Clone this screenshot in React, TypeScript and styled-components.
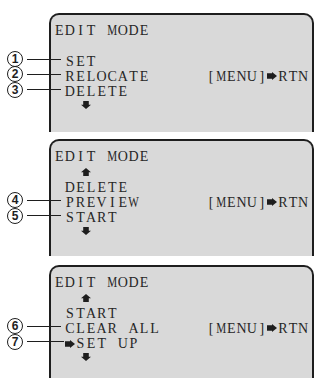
import React from 'react';
import styled, { createGlobalStyle } from 'styled-components';

const CELL = 10.6;
const INK = '#1e1e1e';
const WIDE = 'MW';

const GlobalStyle = createGlobalStyle`
    body {
        margin: 0;
        background: #ffffff;
    }
`;

const Page = styled.main`
    display: flex;
    flex-direction: column;
    box-sizing: border-box;
    width: 320px;
    padding: 13px 0 0 49px;
`;

const Screen = styled.section<{ $height: number; $gap: number }>`
    box-sizing: border-box;
    width: 265px;
    height: ${(p) => p.$height}px;
    margin-bottom: ${(p) => p.$gap}px;
    padding: 8px 3px 0 3px;
    background: #d9d9d9;
    border: 2px solid ${INK};
    border-bottom: none;
    border-radius: 10px 10px 0 0;
    font-family: 'Liberation Serif', 'Times New Roman', serif;
    font-size: 14px;
    color: #262626;
`;

const Line = styled.div<{ $indent?: number }>`
    position: relative;
    display: flex;
    align-items: flex-start;
    height: 15.3px;
    line-height: 15.3px;
    padding-left: ${(p) => p.$indent ?? 0}px;
    white-space: pre;
`;

// the OSD font is a fixed grid: every character sits in its own cell
const Cell = styled.span<{ $width: number }>`
    display: inline-flex;
    justify-content: center;
    width: ${(p) => p.$width}px;
`;

// M and W are wider than a cell, so they are squeezed to fit
const Glyph = styled.span<{ $wide: boolean }>`
    display: inline-block;
    transform: ${(p) => (p.$wide ? 'scaleX(0.8)' : 'none')};
    ${(p) => p.$wide && 'margin: 0 -1.3px;'}
`;

const Menu = styled.span`
    display: flex;
    align-items: flex-start;
    margin-left: auto;
    margin-right: 1px;
`;

const Marker = styled.svg<{ $top: number; $space?: number }>`
    flex: none;
    margin-top: ${(p) => p.$top}px;
    margin-right: ${(p) => p.$space ?? 0}px;
    fill: ${INK};
`;

const Callout = styled.span<{ $reach: number }>`
    position: absolute;
    left: -54px;
    top: -2.5px;
    box-sizing: border-box;
    display: flex;
    align-items: center;
    gap: 4px;
    width: ${(p) => p.$reach}px;
    height: 16px;
    padding-left: 7px;

    &::after {
        content: '';
        flex: 1;
        height: 1px;
        background: ${INK};
    }
`;

const Badge = styled.span`
    box-sizing: border-box;
    display: flex;
    align-items: center;
    justify-content: center;
    width: 16px;
    height: 16px;
    border: 1.3px solid ${INK};
    border-radius: 50%;
    font-family: 'Liberation Sans', Arial, sans-serif;
    font-size: 12px;
    font-weight: bold;
    line-height: 1;
    color: ${INK};
`;

const Mono = ({ text, cell = CELL }: { text: string; cell?: number }) => (
    <>
        {text.split('').map((ch, i) => (
            <Cell key={i} $width={cell}>
                <Glyph $wide={WIDE.includes(ch)}>{ch}</Glyph>
            </Cell>
        ))}
    </>
);

type Row =
    | { kind: 'title' }
    | { kind: 'blank' }
    | { kind: 'up' }
    | { kind: 'down' }
    | { kind: 'item'; label: string; callout?: number; menu?: boolean; cursor?: boolean };

const screens: { height: number; gap: number; rows: Row[] }[] = [
    {
        height: 119,
        gap: 7,
        rows: [
            { kind: 'title' },
            { kind: 'blank' },
            { kind: 'item', label: 'SET', callout: 1 },
            { kind: 'item', label: 'RELOCATE', callout: 2, menu: true },
            { kind: 'item', label: 'DELETE', callout: 3 },
            { kind: 'down' },
        ],
    },
    {
        height: 117,
        gap: 9,
        rows: [
            { kind: 'title' },
            { kind: 'up' },
            { kind: 'item', label: 'DELETE' },
            { kind: 'item', label: 'PREVIEW', callout: 4, menu: true },
            { kind: 'item', label: 'START', callout: 5 },
            { kind: 'down' },
        ],
    },
    {
        height: 113,
        gap: 0,
        rows: [
            { kind: 'title' },
            { kind: 'up' },
            { kind: 'item', label: 'START' },
            { kind: 'item', label: 'CLEAR ALL', callout: 6, menu: true },
            { kind: 'item', label: 'SET UP', callout: 7, cursor: true },
            { kind: 'down' },
        ],
    },
];

const UpArrow = () => (
    <Marker $top={3.5} width="10" height="8" viewBox="0 0 10 8">
        <polygon points="5,0 10,4.2 7.8,4.2 7.8,8 2.2,8 2.2,4.2 0,4.2" />
    </Marker>
);

const DownArrow = () => (
    <Marker $top={1.7} width="10" height="8" viewBox="0 0 10 8">
        <polygon points="2.2,0 7.8,0 7.8,3.8 10,3.8 5,8 0,3.8 2.2,3.8" />
    </Marker>
);

const RightArrow = ({ space = 0 }: { space?: number }) => (
    <Marker $top={3.5} $space={space} width="10" height="8" viewBox="0 0 10 8">
        <polygon points="0,1.2 5,1.2 5,0 10,4 5,8 5,6.8 0,6.8" />
    </Marker>
);

const renderRow = (row: Row, i: number) => {
    switch (row.kind) {
        case 'title':
            return (
                <Line key={i}>
                    <Mono text="EDIT MODE" />
                </Line>
            );
        case 'blank':
            return <Line key={i} />;
        case 'up':
            return (
                <Line key={i} $indent={27}>
                    <UpArrow />
                </Line>
            );
        case 'down':
            return (
                <Line key={i} $indent={27}>
                    <DownArrow />
                </Line>
            );
        default:
            return (
                <Line key={i} $indent={CELL}>
                    {row.callout && (
                        <Callout $reach={row.cursor ? 64 : 61}>
                            <Badge>{row.callout}</Badge>
                        </Callout>
                    )}
                    {row.cursor && <RightArrow space={CELL - 10} />}
                    <Mono text={row.label} />
                    {row.menu && (
                        <Menu>
                            <Mono text="[MENU]" cell={10.2} />
                            <RightArrow space={1} />
                            <Mono text="RTN" cell={10} />
                        </Menu>
                    )}
                </Line>
            );
    }
};

const App = () => {
    return (
        <>
            <GlobalStyle />
            <Page>
                {screens.map((screen, i) => (
                    <Screen key={i} $height={screen.height} $gap={screen.gap}>
                        {screen.rows.map(renderRow)}
                    </Screen>
                ))}
            </Page>
        </>
    );
};

export default App;
